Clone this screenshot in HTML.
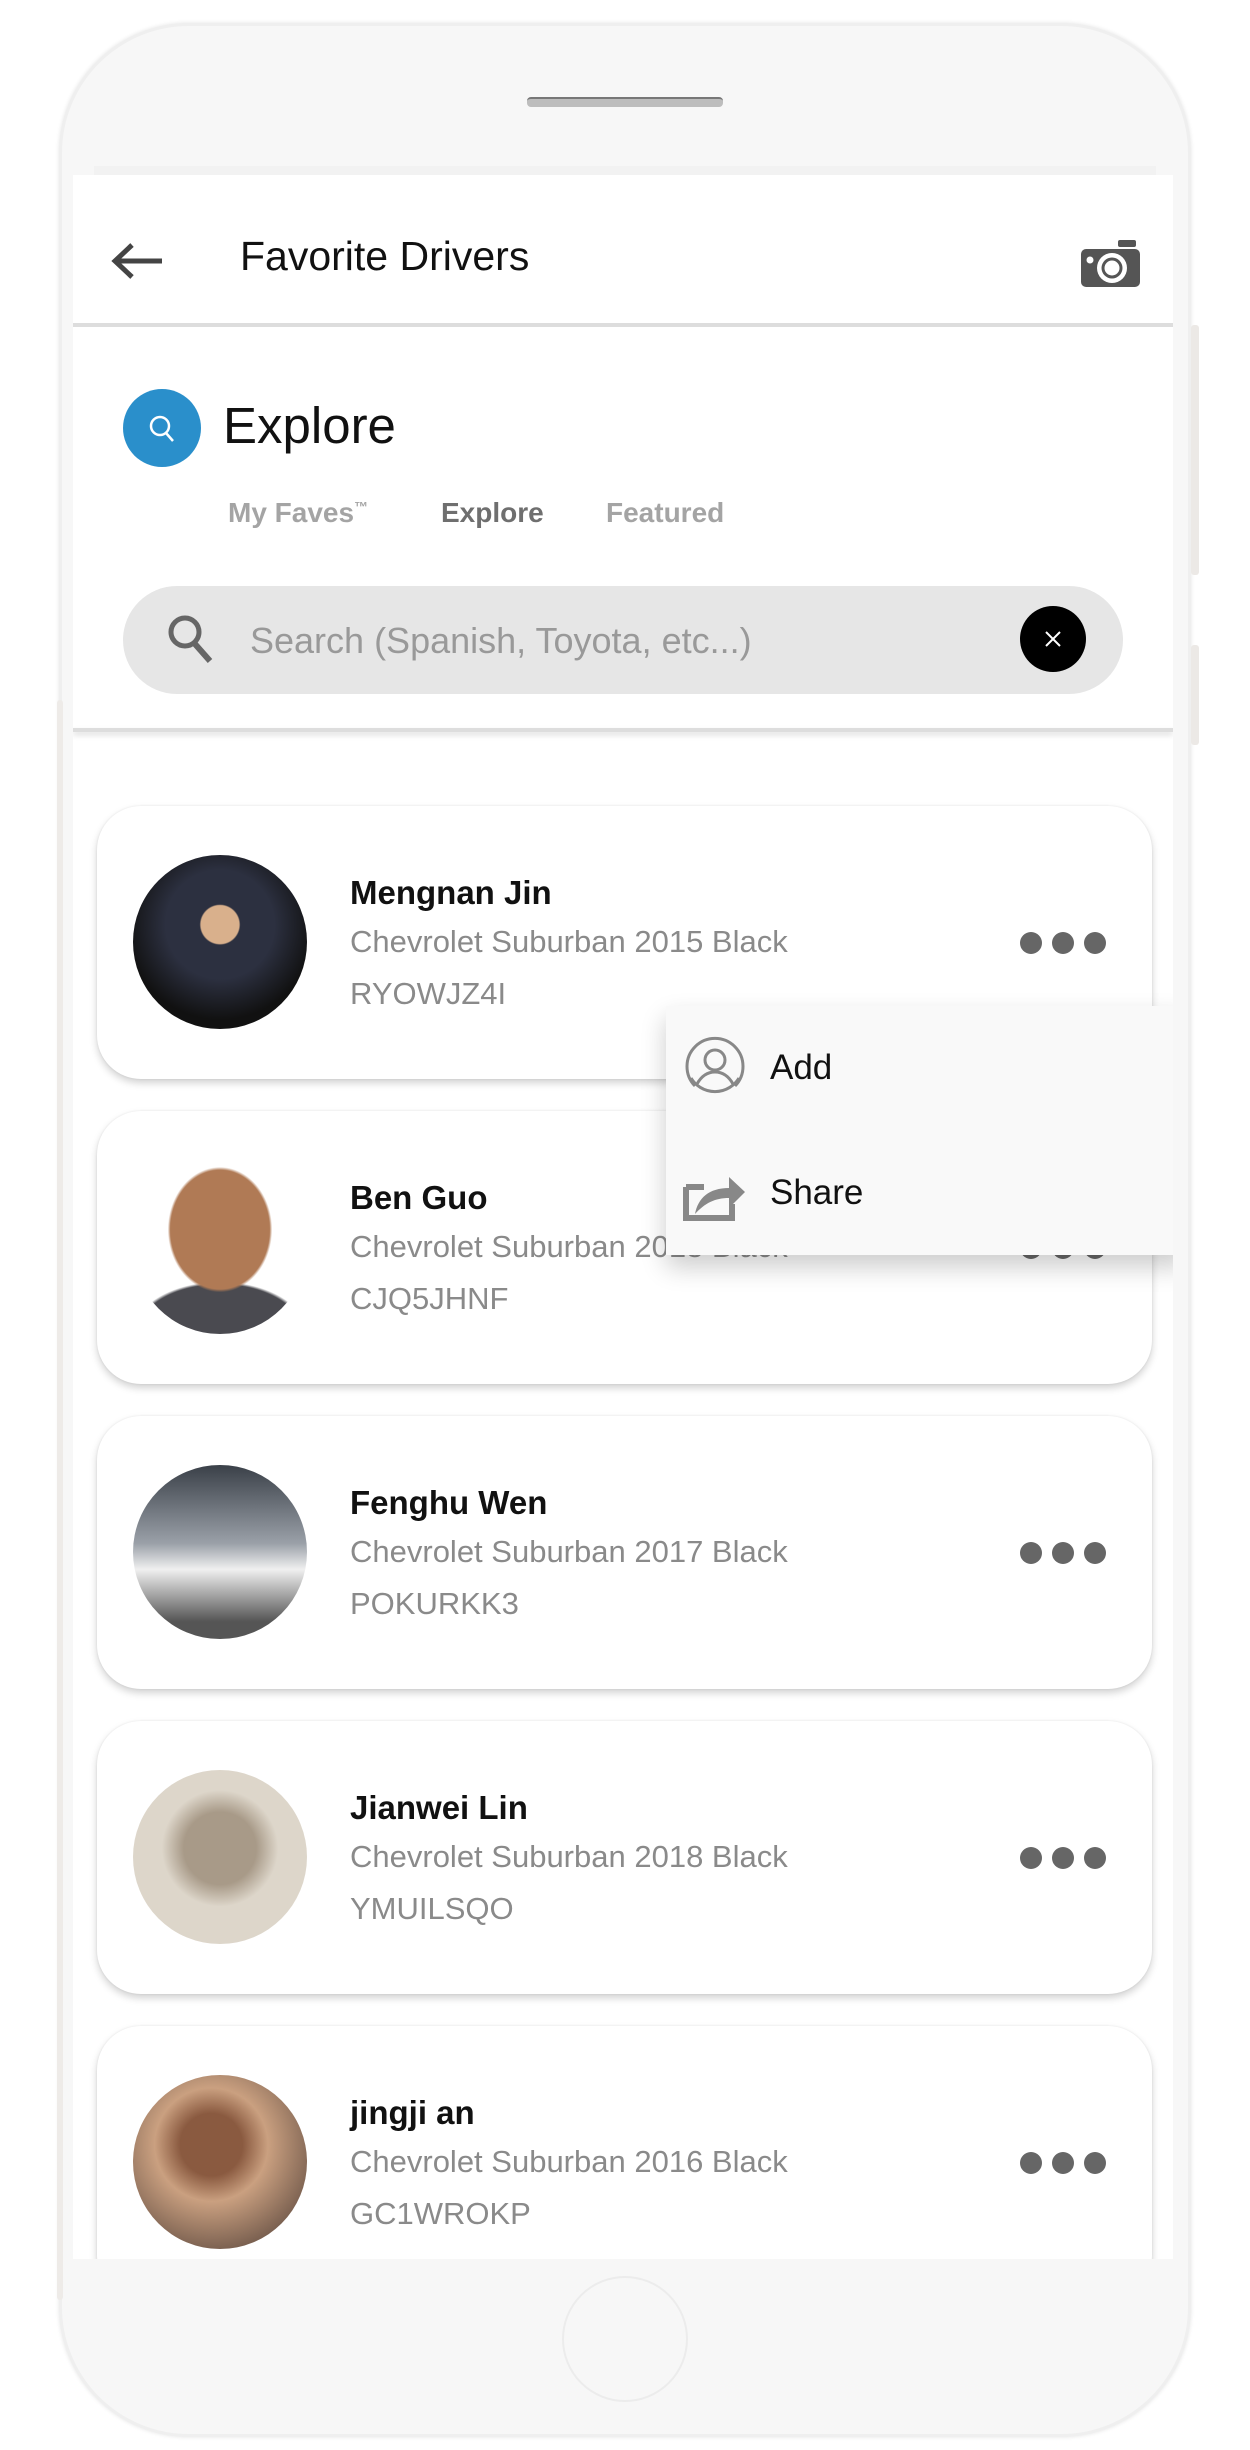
<!DOCTYPE html>
<html><head><meta charset="utf-8"><style>
*{margin:0;padding:0;box-sizing:border-box}
body{width:1250px;height:2450px;background:#fff;position:relative;overflow:hidden;font-family:"Liberation Sans",sans-serif}
.phone{position:absolute;left:59px;top:23px;width:1132px;height:2414px;border-radius:130px;background:#f7f7f7;box-shadow:0 0 4px #e4e4e4;border:3px solid #efefef}
.side{position:absolute;background:#ece9e6;border-radius:3px}
.screen{position:absolute;left:73px;top:175px;width:1100px;height:2084px;background:#fff;overflow:hidden}
.abs{position:absolute}
.card{position:absolute;left:24px;width:1055px;height:273px;background:#fff;border-radius:44px;box-shadow:0 4px 8px rgba(0,0,0,.18),0 0 2px rgba(0,0,0,.08)}
.av{position:absolute;left:36px;top:49px;width:174px;height:174px;border-radius:50%}
.nm{position:absolute;left:253px;top:68px;font-size:33px;color:#111;font-weight:bold}
.car{position:absolute;left:253px;top:118px;font-size:31px;color:#8a8a8a}
.pl{position:absolute;left:253px;top:170px;font-size:31px;color:#8a8a8a}
.dots{position:absolute;left:923px;top:126px}
.dots i{display:inline-block;width:22px;height:22px;border-radius:50%;background:#666;margin-right:10px}
</style></head><body>
<div class="phone"></div>
<div class="side" style="left:1191px;top:325px;width:8px;height:250px"></div>
<div class="side" style="left:1191px;top:645px;width:8px;height:100px"></div>
<div class="side" style="left:57px;top:700px;width:6px;height:1600px;background:#eeebe8"></div>
<div class="abs" style="left:527px;top:97px;width:196px;height:10px;background:#bdbdbd;border-top:2px solid #777;border-radius:4px"></div>
<div class="abs" style="left:94px;top:166px;width:1062px;height:10px;background:#f2f2f2"></div>
<div class="screen">
  <svg class="abs" style="left:37px;top:66px" width="54" height="40" viewBox="0 0 54 40"><path d="M52 20H6M22 4L5 20l17 16" fill="none" stroke="#444" stroke-width="5"/></svg>
  <div class="abs" style="left:167px;top:58px;font-size:41px;color:#111">Favorite Drivers</div>
  <svg class="abs" style="left:1007px;top:65px" width="62" height="48" viewBox="0 0 62 48"><rect x="38" y="0" width="18" height="7" rx="2" fill="#555"/><rect x="1" y="9" width="59" height="38" rx="5" fill="#555"/><circle cx="32" cy="28" r="15" fill="#fff"/><circle cx="32" cy="28" r="10.5" fill="#555"/><circle cx="32" cy="28" r="7.5" fill="#fff"/><circle cx="10" cy="20" r="3.5" fill="#fff"/></svg>
  <div class="abs" style="left:0;top:148px;width:1100px;height:4px;background:#ddd"></div>
  <div class="abs" style="left:50px;top:214px;width:78px;height:78px;border-radius:50%;background:#2a8fcb"></div>
  <svg class="abs" style="left:74px;top:238px" width="32" height="32" viewBox="0 0 32 32"><circle cx="13" cy="13" r="9" fill="none" stroke="#fff" stroke-width="2.5"/><path d="M19 20l7 8" stroke="#fff" stroke-width="2.5"/></svg>
  <div class="abs" style="left:150px;top:221px;font-size:51px;color:#111">Explore</div>
  <div class="abs" style="left:155px;top:322px;font-size:28px;color:#a4a4a4;font-weight:bold">My Faves<sup style="font-size:14px">™</sup></div>
  <div class="abs" style="left:368px;top:322px;font-size:28px;color:#6f6f6f;font-weight:bold">Explore</div>
  <div class="abs" style="left:533px;top:322px;font-size:28px;color:#a4a4a4;font-weight:bold">Featured</div>
  <div class="abs" style="left:50px;top:411px;width:1000px;height:108px;border-radius:54px;background:#e6e6e6"></div>
  <svg class="abs" style="left:93px;top:438px" width="50" height="54" viewBox="0 0 50 54"><circle cx="19" cy="19" r="14" fill="none" stroke="#666" stroke-width="5"/><path d="M29 31l15 17" stroke="#666" stroke-width="6"/></svg>
  <div class="abs" style="left:177px;top:445px;font-size:36px;color:#999">Search (Spanish, Toyota, etc...)</div>
  <div class="abs" style="left:947px;top:431px;width:66px;height:66px;border-radius:50%;background:#000"></div>
  <svg class="abs" style="left:970px;top:454px" width="20" height="20"><path d="M3 3l14 14M17 3L3 17" stroke="#fff" stroke-width="2"/></svg>
  <div class="abs" style="left:0;top:553px;width:1100px;height:4px;background:#ddd;box-shadow:0 3px 6px rgba(0,0,0,.15)"></div>

  <div class="card" style="top:631px"><div class="av" style="background:radial-gradient(circle at 50% 40%,#d9b08c 0 14%,#2c3040 15% 40%,#111 70%)"></div><div class="nm">Mengnan Jin</div><div class="car">Chevrolet Suburban 2015 Black</div><div class="pl">RYOWJZ4I</div><div class="dots"><i></i><i></i><i></i></div></div>
  <div class="card" style="top:936px"><div class="av" style="background:radial-gradient(ellipse 30% 36% at 50% 40%,#b07a55 0 95%,transparent 100%),radial-gradient(ellipse 50% 30% at 50% 100%,#4a4a50 0 95%,transparent 100%),#fff"></div><div class="nm">Ben Guo</div><div class="car">Chevrolet Suburban 2018 Black</div><div class="pl">CJQ5JHNF</div><div class="dots"><i></i><i></i><i></i></div></div>
  <div class="card" style="top:1241px"><div class="av" style="background:linear-gradient(#3a4048,#9aa0a8 45%,#f0f0f0 60%,#555 90%)"></div><div class="nm">Fenghu Wen</div><div class="car">Chevrolet Suburban 2017 Black</div><div class="pl">POKURKK3</div><div class="dots"><i></i><i></i><i></i></div></div>
  <div class="card" style="top:1546px"><div class="av" style="background:radial-gradient(circle at 50% 45%,#a89a88 0 28%,#ddd6ca 45%)"></div><div class="nm">Jianwei Lin</div><div class="car">Chevrolet Suburban 2018 Black</div><div class="pl">YMUILSQO</div><div class="dots"><i></i><i></i><i></i></div></div>
  <div class="card" style="top:1851px"><div class="av" style="background:radial-gradient(circle at 45% 40%,#8a5a40 0 22%,#caa080 40%,#7a6050 75%)"></div><div class="nm">jingji an</div><div class="car">Chevrolet Suburban 2016 Black</div><div class="pl">GC1WROKP</div><div class="dots"><i></i><i></i><i></i></div></div>

  <div class="abs" style="left:593px;top:831px;width:520px;height:249px;background:#f9f9f9;box-shadow:0 12px 24px rgba(0,0,0,.2)">
    <svg class="abs" style="left:17px;top:30px" width="64" height="64" viewBox="0 0 64 64"><path d="M12 50A28 28 0 1 1 52 50" fill="none" stroke="#888" stroke-width="3"/><path d="M8 42A28 28 0 0 0 56 42" fill="none" stroke="#888" stroke-width="3"/><circle cx="32" cy="24" r="10" fill="none" stroke="#888" stroke-width="3"/><path d="M14 48c5-9 11-12 18-12s13 3 18 12" fill="none" stroke="#888" stroke-width="3"/></svg>
    <div class="abs" style="left:104px;top:42px;font-size:35px;color:#111">Add</div>
    <svg class="abs" style="left:17px;top:160px" width="64" height="56" viewBox="0 0 64 56"><path d="M3 21h18M3 21v31h46V38" fill="none" stroke="#888" stroke-width="6"/><path d="M12 48c3-16 14-26 34-26V11l16 15-16 16v-10c-14 0-24 5-34 16z" fill="#888"/></svg>
    <div class="abs" style="left:104px;top:167px;font-size:35px;color:#111">Share</div>
  </div>
</div>
<div class="abs" style="left:562px;top:2276px;width:126px;height:126px;border-radius:50%;border:2px solid #ececec"></div>
</body></html>
